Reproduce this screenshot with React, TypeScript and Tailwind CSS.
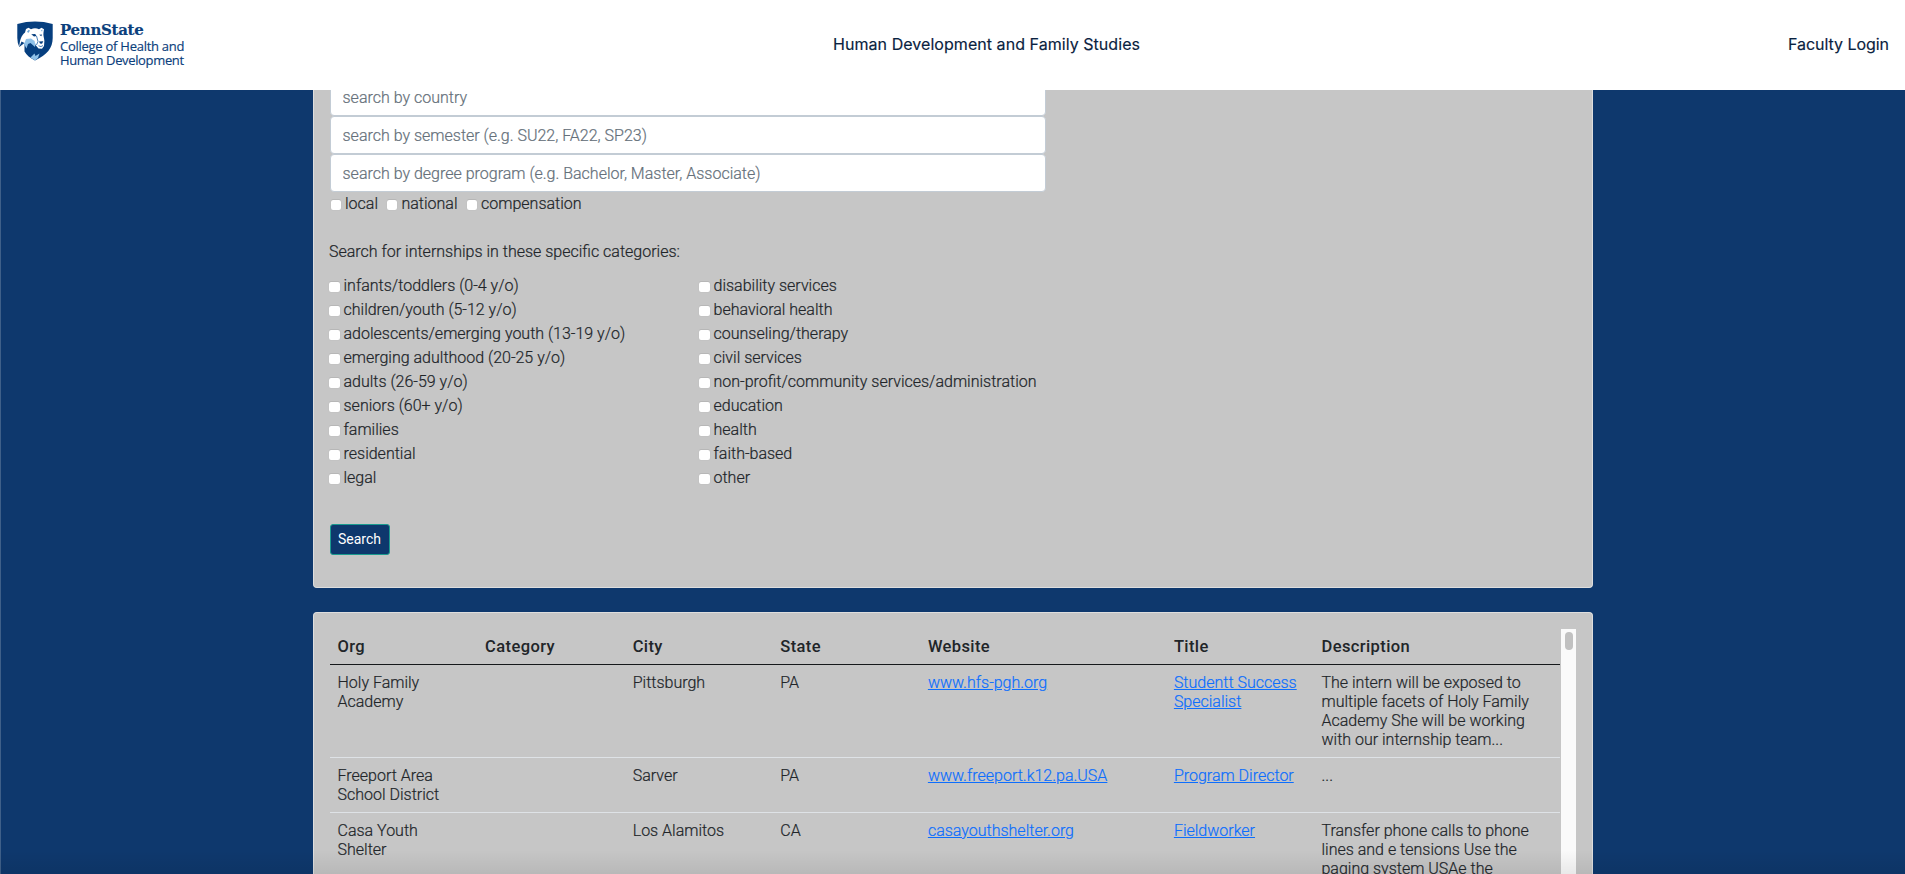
import React from "react";

const leftCategories = [
  "infants/toddlers (0-4 y/o)",
  "children/youth (5-12 y/o)",
  "adolescents/emerging youth (13-19 y/o)",
  "emerging adulthood (20-25 y/o)",
  "adults (26-59 y/o)",
  "seniors (60+ y/o)",
  "families",
  "residential",
  "legal",
];

const rightCategories = [
  "disability services",
  "behavioral health",
  "counseling/therapy",
  "civil services",
  "non-profit/community services/administration",
  "education",
  "health",
  "faith-based",
  "other",
];

const fields = [
  "search by country",
  "search by semester (e.g. SU22, FA22, SP23)",
  "search by degree program (e.g. Bachelor, Master, Associate)",
];

const headings = ["Org", "Category", "City", "State", "Website", "Title", "Description"];

const rows = [
  {
    org: "Holy Family Academy",
    category: "",
    city: "Pittsburgh",
    state: "PA",
    website: "www.hfs-pgh.org",
    title: "Studentt Success Specialist",
    description:
      "The intern will be exposed to multiple facets of Holy Family Academy She will be working with our internship team...",
  },
  {
    org: "Freeport Area School District",
    category: "",
    city: "Sarver",
    state: "PA",
    website: "www.freeport.k12.pa.USA",
    title: "Program Director",
    description: "...",
  },
  {
    org: "Casa Youth Shelter",
    category: "",
    city: "Los Alamitos",
    state: "CA",
    website: "casayouthshelter.org",
    title: "Fieldworker",
    description: "Transfer phone calls to phone lines and e tensions Use the paging system USAe the",
  },
];

function Check({ label }: { label: string }) {
  return (
    <label className="flex h-6 items-center gap-[4px] whitespace-nowrap">
      <input
        type="checkbox"
        className="mt-[2px] size-[10.5px] shrink-0 appearance-none rounded-[2px] bg-white shadow-[0_0_1px_0_rgba(0,0,0,0.15),0_-1px_0_0_rgba(0,0,0,0.06)]"
      />
      {label}
    </label>
  );
}

function CategoryList({ items }: { items: string[] }) {
  return (
    <div className="w-[370px]">
      {items.map((item) => (
        <Check key={item} label={item} />
      ))}
    </div>
  );
}

function Logo() {
  return (
    <div className="flex w-[187px] gap-[7px] pt-[21px] pl-[17px] text-[#0b407c]">
      <svg width="36" height="40" viewBox="0 0 36 40" className="shrink-0">
        <path
          d="M0.300 3Q18-1.800 35.700 3V17C35.700 27 30 34 18 39.500C13 37 9.500 34 7.500 30.500L7.500 22L2.300 26Q0.300 22 0.300 17Z"
          fill="#063f7f"
        />
        <path d="M7.500 17.500L15 16.500L18.500 21L18 26L13.500 22L11 23L9.500 27.500L7 23Z" fill="#8fc1e8" />
        <path d="M13.500 36.500L17.500 32.500L18.500 35L22.500 32.500L21 37L18 39.500Z" fill="#8fc1e8" />
        <path
          d="M2.300 26C2.800 19 4 15 8 11.500L9 8L11.500 6.800L14 8.200C16.500 7 19.500 7 22 8.200L24.500 6.800L27 8.200L26.500 11.500C26 14.500 27.200 17 27.400 20L27 25L25 27.800L21.500 27.600L18.500 24L17.500 20L14 17.500L9 18L7.500 22L4.500 20.500Z"
          fill="#fff"
        />
        <path d="M10 10.500L11.800 8.800L13 9.800L11.200 12ZM24 9L25.500 8.800L25 10.800Z" fill="#6aa5d6" />
        <path d="M14.200 13.200L18.200 13L19.500 15L17 15.500ZM22.200 13.800L25 13.400L24.300 15.300Z" fill="#063f7f" />
        <path d="M19.500 15L21 20.500L19.500 24M21.500 24.800L24 25.600L26 24.500" fill="none" stroke="#3a75b0" strokeWidth="0.9" />
        <path d="M22 20.500L26.300 20.300L25 22.800L23 22.500Z" fill="#063f7f" />
      </svg>
      <div className="whitespace-nowrap">
        <div className="pt-px font-['DejaVu_Serif',serif] text-[15px] leading-[17px] font-bold tracking-[-0.3px]">
          PennState
        </div>
        <div className="font-['Open_Sans',sans-serif] text-[13px] leading-[14px] font-normal">
          <div className="tracking-[-0.26px]">College of Health and</div>
          <div className="tracking-[-0.35px]">Human Development</div>
        </div>
      </div>
    </div>
  );
}

export default function App() {
  return (
    <div className="relative flex h-[874px] flex-col overflow-hidden bg-[#0e386d] font-['Roboto',sans-serif] text-base font-light text-[#212529]">
      <header className="z-10 flex h-[90px] shrink-0 items-start justify-between bg-white font-['Inter',sans-serif] font-normal text-[#0a2240] [-webkit-text-stroke:0.15px]">
        <Logo />
        <div className="pt-8 pr-[2px] tracking-[0.05px]">Human Development and Family Studies</div>
        <div className="pt-8 pr-4 tracking-[-0.05px]">Faculty Login</div>
      </header>

      <div className="flex flex-1 justify-center shadow-[inset_1px_0_0_#3f6089]">
        <main className="flex w-[1280px] flex-col gap-6 [-webkit-text-stroke:0.2px]">
          <section className="h-[498px] shrink-0 rounded-b border border-t-0 border-[#dedede] bg-[#c6c6c6] px-4">
            <div className="-mt-3 w-[716px]">
              {fields.map((field) => (
                <input
                  key={field}
                  placeholder={field}
                  className="block h-[38px] w-full rounded border border-[#c3ccd5] bg-white px-3 placeholder:text-[#65707a]"
                />
              ))}
            </div>
            <div className="flex gap-[9px] pl-px">
              <Check label="local" />
              <Check label="national" />
              <Check label="compensation" />
            </div>
            <p className="mt-6 -ml-[0.5px]">Search for internships in these specific categories:</p>
            <div className="mt-[10px] -ml-[0.5px] flex">
              <CategoryList items={leftCategories} />
              <CategoryList items={rightCategories} />
            </div>
            <button className="mt-[34px] block h-[31px] w-[60px] rounded-[3px] border border-[#1a9b8f] bg-[#0e386d] pb-[2px] text-sm font-normal text-white [-webkit-text-stroke:0]">
              Search
            </button>
          </section>

          <section className="flex h-[300px] shrink-0 items-start rounded-t border border-b-0 border-[#dedede] bg-[#c6c6c6] px-4 pt-4">
            <table className="w-[1230px] shrink-0 table-fixed border-collapse leading-[19px]">
              <colgroup>
                <col className="w-[12%]" />
                <col className="w-[12%]" />
                <col className="w-[12%]" />
                <col className="w-[12%]" />
                <col className="w-[20%]" />
                <col className="w-[12%]" />
                <col className="w-[20%]" />
              </colgroup>
              <thead>
                <tr className="border-b border-[#15181b]">
                  {headings.map((h) => (
                    <th key={h} className="p-2 text-left text-[16.5px] font-medium tracking-[0.4px] [-webkit-text-stroke:0]">
                      {h}
                    </th>
                  ))}
                </tr>
              </thead>
              <tbody>
                {rows.map((row) => (
                  <tr key={row.org} className="border-b border-[#dee2e6] align-top">
                    <td className="p-2">{row.org}</td>
                    <td className="p-2">{row.category}</td>
                    <td className="p-2">{row.city}</td>
                    <td className="p-2">{row.state}</td>
                    <td className="p-2">
                      <a href="#" className="text-[#0d6efd] underline">
                        {row.website}
                      </a>
                    </td>
                    <td className="p-2">
                      <a href="#" className="text-[#0d6efd] underline">
                        {row.title}
                      </a>
                    </td>
                    <td className="py-2 pr-6 pl-2">{row.description}</td>
                  </tr>
                ))}
              </tbody>
            </table>
            <div className="ml-[1.5px] flex h-full w-[15px] shrink-0 justify-center bg-[#fafafa] pt-[3px]">
              <div className="h-[18px] w-2 rounded-full bg-[#c1c1c1]" />
            </div>
          </section>
        </main>
      </div>

      <div className="pointer-events-none absolute inset-x-0 bottom-0 h-6 bg-linear-to-b from-transparent to-black/7" />
    </div>
  );
}
